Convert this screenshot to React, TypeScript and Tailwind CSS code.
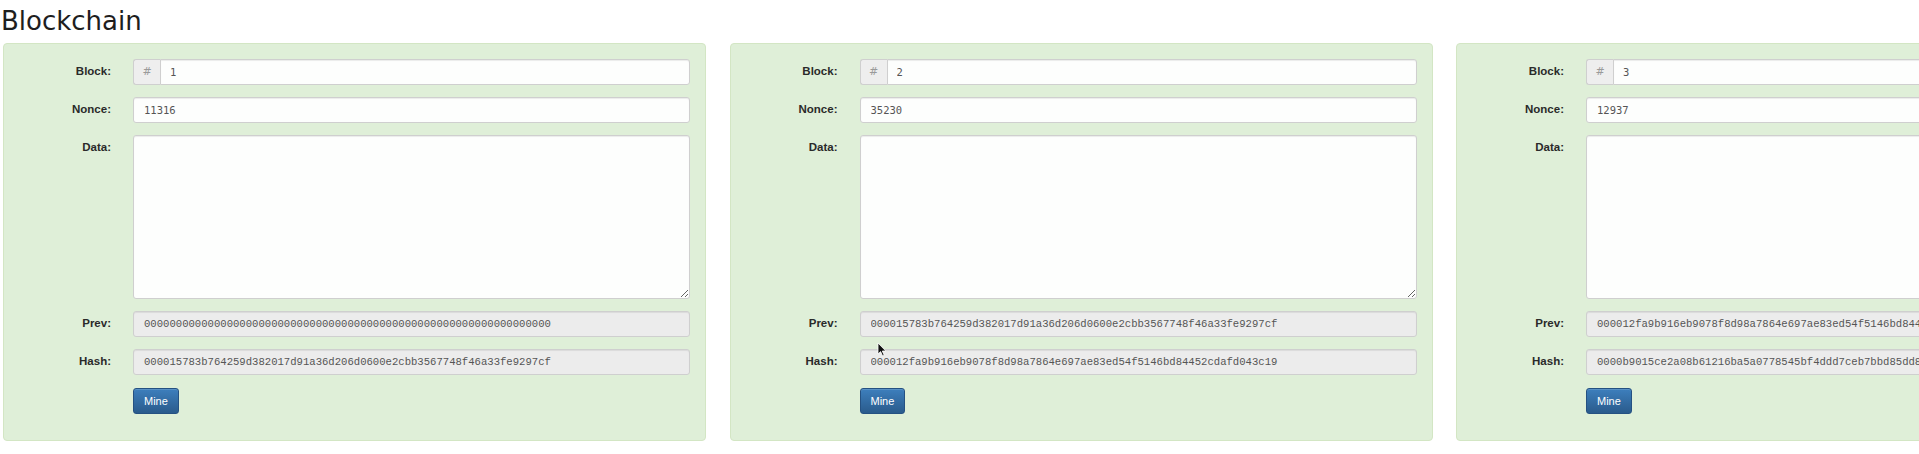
import React from 'react';

type Block = { n: number; nonce: string; prev: string; hash: string };

const blocks: Block[] = [
    {
        n: 1,
        nonce: '11316',
        prev: '0000000000000000000000000000000000000000000000000000000000000000',
        hash: '000015783b764259d382017d91a36d206d0600e2cbb3567748f46a33fe9297cf',
    },
    {
        n: 2,
        nonce: '35230',
        prev: '000015783b764259d382017d91a36d206d0600e2cbb3567748f46a33fe9297cf',
        hash: '000012fa9b916eb9078f8d98a7864e697ae83ed54f5146bd84452cdafd043c19',
    },
    {
        n: 3,
        nonce: '12937',
        prev: '000012fa9b916eb9078f8d98a7864e697ae83ed54f5146bd84452cdafd043c19',
        hash: '0000b9015ce2a08b61216ba5a0778545bf4ddd7ceb7bbd85dd8e3a91c07f2b46',
    },
];

const Label: React.FC<{ children: React.ReactNode }> = ({ children }) => (
    <label className="text-right font-bold text-[11.5px] leading-[24px] text-[#2a2a2a] font-['Liberation_Sans',Arial,sans-serif]">
        {children}
    </label>
);

// shared input look; background is set per field
const inputBase =
    'h-[26px] w-full border border-[#cfcfcf] px-[10px] text-[#555] outline-none shadow-[inset_0_1px_1px_rgba(0,0,0,0.075)]';

const BlockCard: React.FC<{ block: Block }> = ({ block }) => (
    <div className="w-[703px] shrink-0 rounded-[4px] border border-[#d3e6c4] bg-[#dfefd8] pt-[15px] pb-[26px] pr-[15px]">
        <div className="grid grid-cols-[107px_557px] gap-x-[22px] gap-y-[12px]">
            <Label>Block:</Label>
            <div className="flex h-[26px]">
                <span className="flex w-[27px] shrink-0 items-center justify-center rounded-l-[3px] border border-r-0 border-[#cfcfcf] bg-[#eeeeee] text-[11px] text-[#9a9a9a] font-['DejaVu_Sans',sans-serif]">
                    #
                </span>
                <input
                    readOnly
                    value={block.n}
                    className={`${inputBase} bg-[#fdfefd] rounded-r-[3px] pl-[9px] text-[10.5px] font-['DejaVu_Sans_Mono',monospace]`}
                />
            </div>

            <Label>Nonce:</Label>
            <input
                readOnly
                value={block.nonce}
                className={`${inputBase} bg-[#fdfefd] rounded-[3px] text-[10.5px] font-['DejaVu_Sans_Mono',monospace]`}
            />

            <Label>Data:</Label>
            <textarea
                defaultValue=""
                className="block h-[164px] w-full rounded-[3px] border border-[#cfcfcf] bg-[#fdfefd] outline-none shadow-[inset_0_1px_1px_rgba(0,0,0,0.075)]"
            />

            <Label>Prev:</Label>
            <input
                readOnly
                value={block.prev}
                className={`${inputBase} rounded-[3px] bg-[#ececec] text-[10.6px] font-['Liberation_Mono','Courier_New',monospace]`}
            />

            <Label>Hash:</Label>
            <input
                readOnly
                value={block.hash}
                className={`${inputBase} rounded-[3px] bg-[#ececec] text-[10.6px] font-['Liberation_Mono','Courier_New',monospace]`}
            />

            <div />
            <div>
                <button className="h-[26px] rounded-[3px] border border-[#255182] bg-linear-to-b from-[#3d7fbd] to-[#2a5b8c] px-[10px] text-[11px] text-white font-['Liberation_Sans',Arial,sans-serif] shadow-[inset_0_1px_0_rgba(255,255,255,0.15)]">
                    Mine
                </button>
            </div>
        </div>
    </div>
);

export default function App() {
    return (
        <div className="relative min-h-screen w-full overflow-hidden bg-white pl-[3px]">
            <h1 className="ml-[-2px] pt-[6px] pb-[7px] text-[26px] leading-[30px] text-[#1e1e1e] font-['DejaVu_Sans',sans-serif]">
                Blockchain
            </h1>
            <div className="flex gap-[23.5px]">
                {blocks.map((b) => (
                    <BlockCard key={b.n} block={b} />
                ))}
            </div>

            {/* mouse pointer left in the capture */}
            <svg className="pointer-events-none absolute left-[877px] top-[342px]" width="10" height="15" viewBox="0 0 10 15">
                <path d="M1 1 L1 12 L3.6 9.6 L5.6 14 L7.2 13.3 L5.3 9 L8.8 9 Z" fill="#111" stroke="#fff" strokeWidth="0.8" />
            </svg>
        </div>
    );
}
